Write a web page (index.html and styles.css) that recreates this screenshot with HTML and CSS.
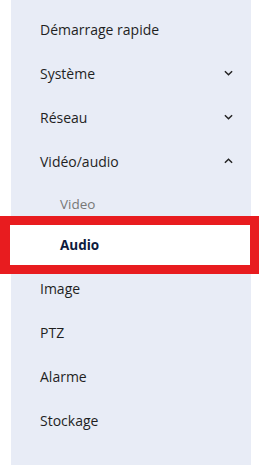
FILE: index.html
```html
<!DOCTYPE html>
<html lang="fr">
<head>
    <meta charset="UTF-8">
    <meta name="viewport" content="width=device-width, initial-scale=1.0">
    <title>Menu</title>
    <link rel="stylesheet" href="styles.css">
</head>
<body>
    <nav class="menu">
        <div class="item">Démarrage rapide</div>
        <div class="item">Système
            <svg class="chevron" viewBox="0 0 10 6"><path d="M1 1l4 4 4-4"/></svg>
        </div>
        <div class="item">Réseau
            <svg class="chevron" viewBox="0 0 10 6"><path d="M1 1l4 4 4-4"/></svg>
        </div>
        <div class="item">Vidéo/audio
            <svg class="chevron" viewBox="0 0 10 6"><path d="M1 5l4-4 4 4"/></svg>
        </div>
        <div class="submenu">
            <div class="sub">Video</div>
            <div class="sub active">Audio</div>
        </div>
        <div class="item">Image</div>
        <div class="item">PTZ</div>
        <div class="item">Alarme</div>
        <div class="item">Stockage</div>
        <div class="highlight"></div>
    </nav>
</body>
</html>
```

FILE: styles.css
```css
body {
    margin: 0;
    background-color: #fff;
    font-family: "Open Sans", "Noto Sans", sans-serif;
}
.menu {
    position: relative;
    margin-left: 11px;
    width: 240px;
    height: 465px;
    background-color: #e8ecf6;
    padding-top: 7px;
    box-sizing: border-box;
}
.item {
    height: 44px;
    display: flex;
    align-items: center;
    justify-content: space-between;
    padding: 0 18px 0 29px;
    font-size: 14px;
    color: #1f1f1f;
}
.chevron {
    width: 9px;
    height: 6px;
    fill: none;
    stroke: #222;
    stroke-width: 1.6;
}
.submenu {
    padding-bottom: 1px;
}
.sub {
    height: 41px;
    display: flex;
    align-items: center;
    padding-left: 49px;
    font-size: 13.5px;
    color: #777;
}
.sub.active {
    background-color: #fff;
    color: #0d1b3e;
    font-weight: 700;
}
.highlight {
    position: absolute;
    left: -11px;
    top: 216px;
    width: 259px;
    height: 58px;
    box-sizing: border-box;
    border: 9px solid #e81c1f;
    border-left-width: 10px;
}
```
